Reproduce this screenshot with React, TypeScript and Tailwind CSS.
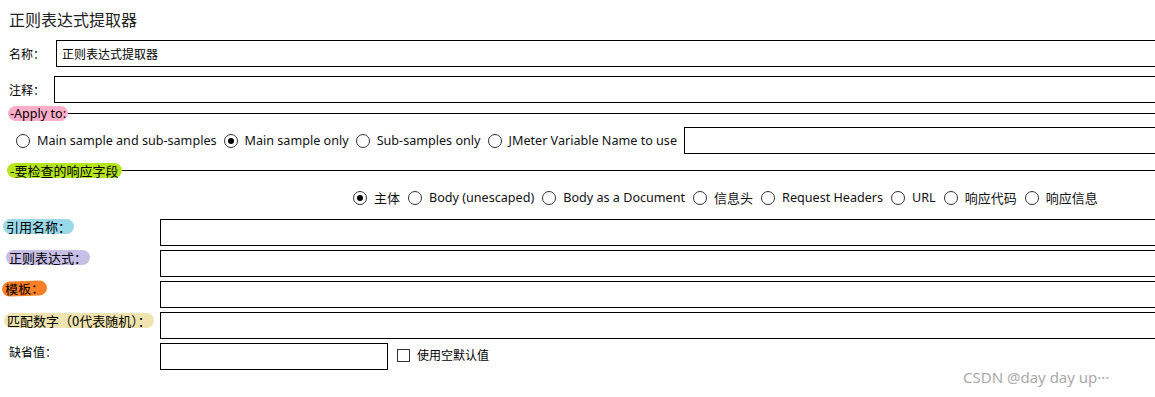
import React from "react";

const cjk = "font-['Noto_Sans_CJK_SC',sans-serif]";
const ui = "font-['Noto_Sans','Noto_Sans_CJK_SC',sans-serif]";

function Radio({ checked }: { checked?: boolean }) {
  return (
    <span className="inline-flex h-[14px] w-[14px] shrink-0 items-center justify-center rounded-full border border-[#333] bg-white">
      {checked && <span className="h-[6px] w-[6px] rounded-full bg-black" />}
    </span>
  );
}

function RadioItem({ label, checked, cn }: { label: string; checked?: boolean; cn?: boolean }) {
  return (
    <span className="flex items-center gap-[7px]">
      <Radio checked={checked} />
      <span className={`${cn ? `${cjk} text-[13px]` : `${ui} text-[12.6px]`} leading-[18px] text-[#111] whitespace-nowrap`}>{label}</span>
    </span>
  );
}

function Input({ cls }: { cls: string }) {
  return <div className={`h-[27px] border border-black bg-white ${cls}`} />;
}

function Pill({ text, color, cls = "" }: { text: string; color: string; cls?: string }) {
  return (
    <span className={`block rounded-full px-[3px] leading-[15px] text-[13px] text-black ${cjk} ${color} ${cls}`}>{text}</span>
  );
}

function LabelCell({ pl, children }: { pl: string; children: React.ReactNode }) {
  return <div className={`flex w-[160px] items-start ${pl}`}>{children}</div>;
}

export default function App() {
  return (
    <div className="relative h-[397px] w-[1155px] overflow-hidden bg-white text-black">
      <div className={`pl-[9px] pt-[8px] text-[16px] leading-[22px] text-[#222] ${cjk}`}>正则表达式提取器</div>

      <div className="mt-[10px] flex items-center">
        <span className={`w-[56px] pl-[9px] text-[12px] ${cjk}`}>名称：</span>
        <div className={`flex h-[27px] flex-1 items-center border border-black pl-[5px] text-[12px] mr-[-4px] ${cjk}`}>正则表达式提取器</div>
      </div>

      <div className="mt-[9px] flex items-center">
        <span className={`w-[54px] pl-[9px] text-[12px] ${cjk}`}>注释：</span>
        <Input cls="flex-1 mr-[-4px]" />
      </div>

      <div className="mt-[3px] flex items-center">
        <span className={`ml-[8px] inline-block rounded-full bg-[#ffaec9] px-[2px] text-[12.6px] leading-[15px] ${ui}`}>-Apply to:</span>
        <div className="h-px flex-1 bg-black" />
      </div>

      <div className="mt-[6px] flex items-center gap-[7px] pl-[16px]">
        <RadioItem label="Main sample and sub-samples" />
        <RadioItem label="Main sample only" checked />
        <RadioItem label="Sub-samples only" />
        <RadioItem label="JMeter Variable Name to use" />
        <Input cls="flex-1 mr-[-4px]" />
      </div>

      <div className="mt-[9px] flex items-center">
        <span className={`ml-[7px] inline-block rounded-full bg-[#b5e61d] px-[3px] text-[13px] leading-[15px] ${cjk}`}>-要检查的响应字段</span>
        <div className="h-px flex-1 bg-black" />
      </div>

      <div className="mt-[11px] flex items-center gap-[8px] pl-[353px]">
        <RadioItem label="主体" checked cn />
        <RadioItem label="Body (unescaped)" />
        <RadioItem label="Body as a Document" />
        <RadioItem label="信息头" cn />
        <RadioItem label="Request Headers" />
        <RadioItem label="URL" />
        <RadioItem label="响应代码" cn />
        <RadioItem label="响应信息" cn />
      </div>

      <div className="mt-[12px] flex flex-col gap-[4px]">
        <div className="flex items-start">
          <LabelCell pl="pl-[3px]"><Pill text="引用名称：" color="bg-[#99d9ea]" /></LabelCell>
          <Input cls="flex-1 mr-[-4px]" />
        </div>
        <div className="flex items-start">
          <LabelCell pl="pl-[6px]"><Pill text="正则表达式：" color="bg-[#c8bfe7]" /></LabelCell>
          <Input cls="flex-1 mr-[-4px]" />
        </div>
        <div className="flex items-start">
          <LabelCell pl="pl-[2px]"><Pill text="模板：" color="bg-[#ff7f27]" cls="-rotate-2" /></LabelCell>
          <Input cls="flex-1 mr-[-4px]" />
        </div>
        <div className="flex items-start">
          <LabelCell pl="pl-[4px] pt-[1px]"><Pill text="匹配数字（0代表随机）：" color="bg-[#efe4b0]" /></LabelCell>
          <Input cls="flex-1 mr-[-4px]" />
        </div>
        <div className="flex items-start">
          <div className={`w-[160px] pl-[9px] pt-[1px] text-[12px] leading-[16px] ${cjk}`}>缺省值：</div>
          <Input cls="w-[228px]" />
          <span className="ml-[9px] mt-[6px] h-[13px] w-[13px] border border-[#333]" />
          <span className={`ml-[7px] mt-[4px] text-[12px] leading-[16px] ${cjk}`}>使用空默认值</span>
        </div>
      </div>

      <div className={`absolute left-[963px] top-[366px] text-[15px] text-[#aaa] ${ui}`}>CSDN @day day up···</div>
    </div>
  );
}
